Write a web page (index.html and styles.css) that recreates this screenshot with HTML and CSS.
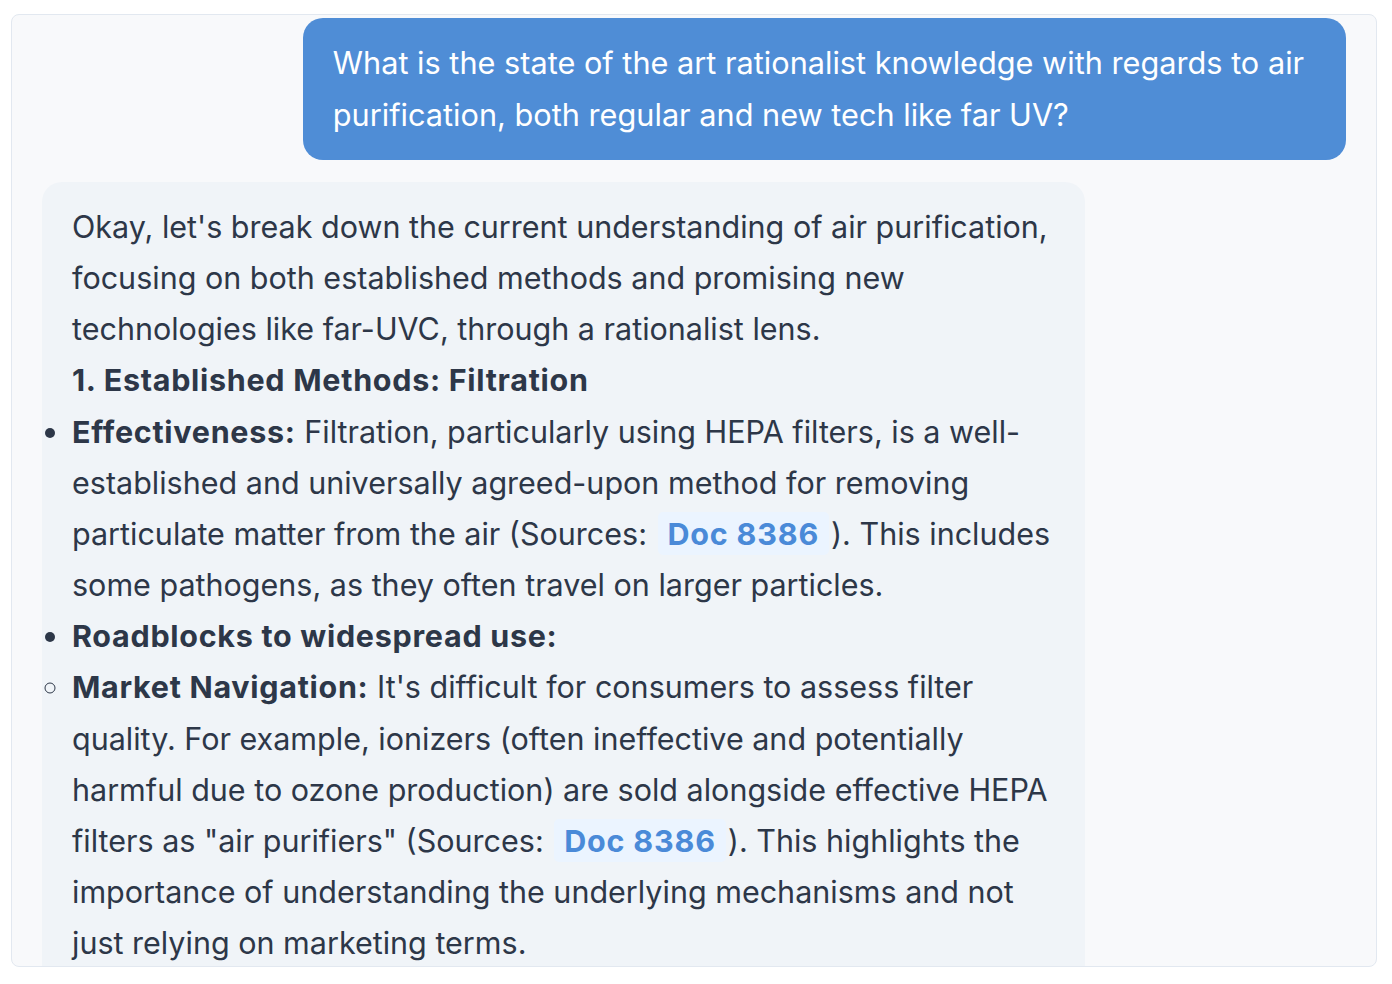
FILE: index.html
```html
<!DOCTYPE html>
<html lang="en">
<head>
<meta charset="utf-8">
<title>Chat</title>
<link rel="stylesheet" href="styles.css">
</head>
<body>
<div class="chat">
  <div class="msg user">
    <div class="bubble user-bubble">What is the state of the art rationalist knowledge with regards to air purification, both regular and new tech like far UV?</div>
  </div>
  <div class="msg bot">
    <div class="bubble bot-bubble">
      <p>Okay, let's break down the current understanding of air purification, focusing on both established methods and promising new technologies like far-UVC, through a rationalist lens.</p>
      <p><strong>1. Established Methods: Filtration</strong></p>
      <ul>
        <li><strong>Effectiveness:</strong> Filtration, particularly using HEPA filters, is a well-established and universally agreed-upon method for removing particulate matter from the air (Sources: <span class="cite">Doc 8386</span>). This includes some pathogens, as they often travel on larger particles.</li>
        <li><strong>Roadblocks to widespread use:</strong>
          <ul>
            <li><strong>Market Navigation:</strong> It's difficult for consumers to assess filter quality. For example, ionizers (often ineffective and potentially harmful due to ozone production) are sold alongside effective HEPA filters as "air purifiers" (Sources: <span class="cite">Doc 8386</span>). This highlights the importance of understanding the underlying mechanisms and not just relying on marketing terms.</li>
          </ul>
        </li>
      </ul>
    </div>
  </div>
</div>
</body>
</html>
```

FILE: styles.css
```css
html, body {
  margin: 0;
  padding: 0;
  background: #ffffff;
}
body {
  padding: 14px 15px 0 11px;
  font-family: Inter, "Noto Sans", sans-serif;
}
.chat {
  height: 953px;
  box-sizing: border-box;
  border: 1px solid #e2e8f0;
  border-radius: 8px;
  background: #f8f9fb;
  padding: 3px 30px 0 30px;
  overflow: hidden;
  display: flex;
  flex-direction: column;
  gap: 22px;
}
.msg {
  display: flex;
}
.msg.user {
  justify-content: flex-end;
}
.msg.bot {
  justify-content: flex-start;
}
.bubble {
  width: 80%;
  box-sizing: border-box;
  border-radius: 20px;
}
.user-bubble {
  background: #4f8dd6;
  color: #ffffff;
  font-size: 30.7px;
  line-height: 52px;
  padding: 19px 30px;
}
.bot-bubble {
  background: #f0f4f8;
  color: #2d3748;
  font-size: 30.5px;
  line-height: 51.15px;
  padding: 19px 30px;
}
.bot-bubble p {
  margin: 0;
}
.bot-bubble strong {
  font-weight: 700;
  letter-spacing: 0.7px;
}
.bot-bubble ul {
  margin: 0;
  padding: 0;
  list-style: disc outside;
}
.bot-bubble ul ul {
  list-style: circle outside;
}
.cite {
  display: inline-block;
  background: #ebf4ff;
  color: #4a8ad8;
  font-weight: 700;
  letter-spacing: 0.8px;
  line-height: 43px;
  padding: 0 10px;
  border-radius: 5px;
  margin: 0 2px;
}
```
